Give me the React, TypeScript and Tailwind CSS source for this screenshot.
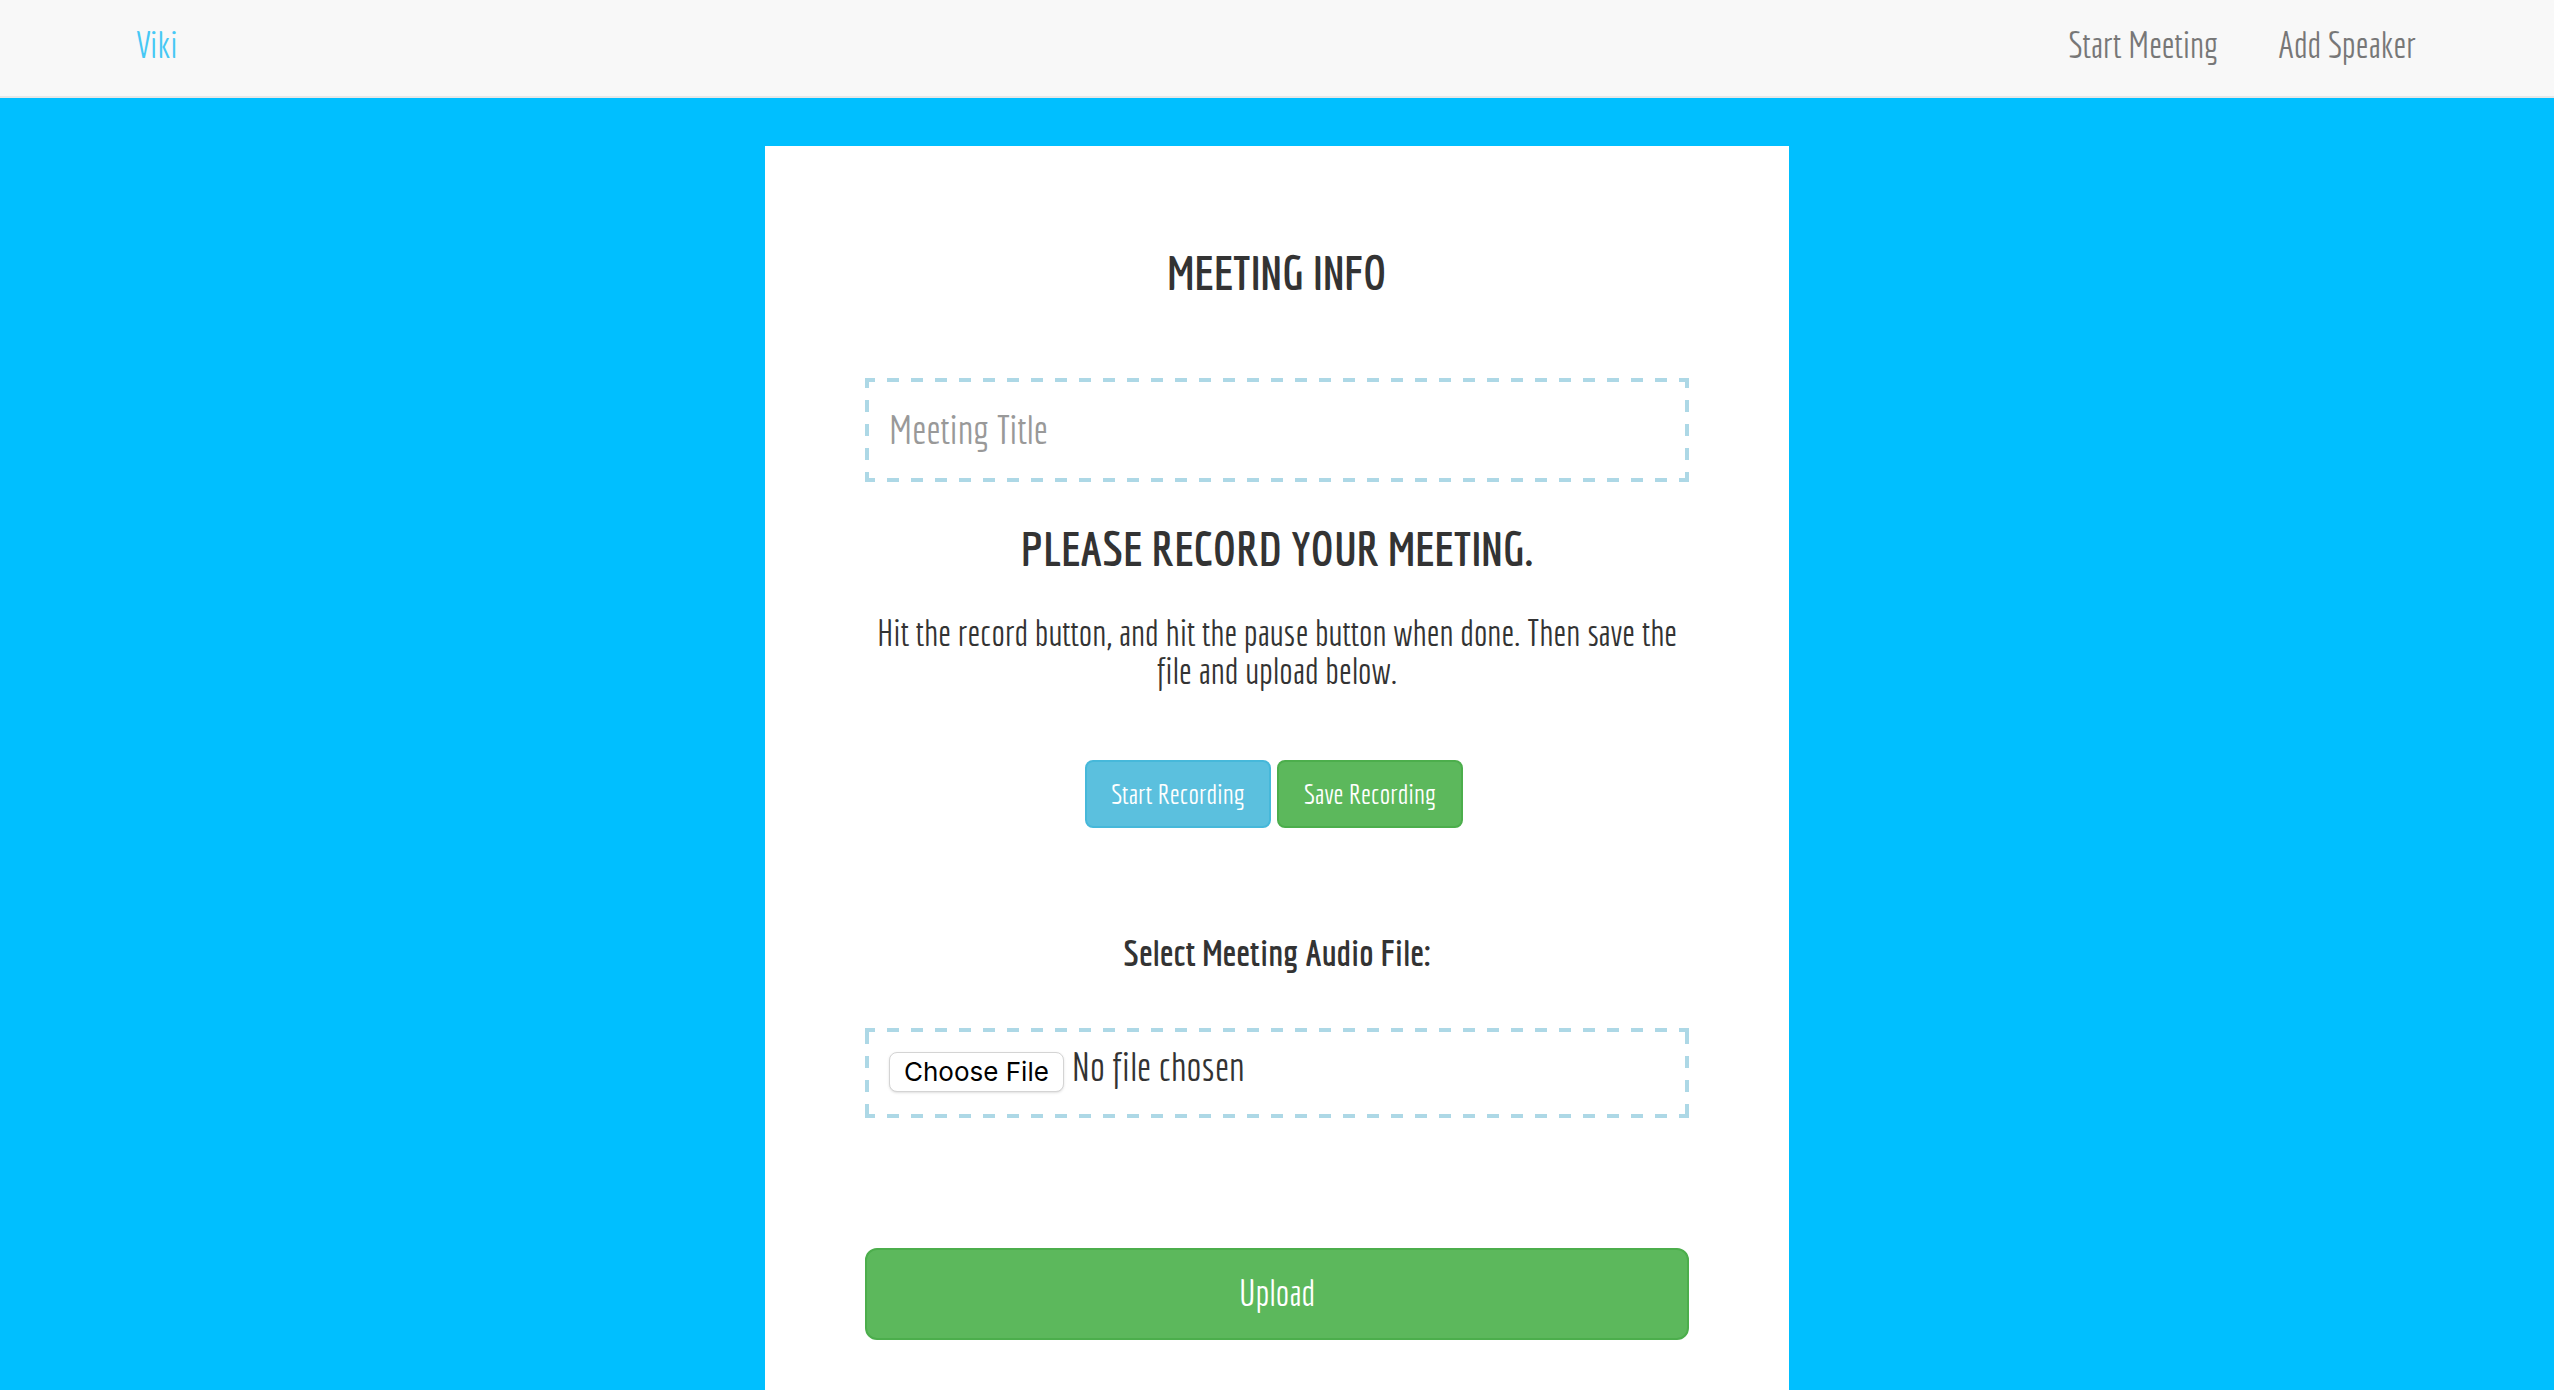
import React from 'react';

const navLinks = ['Start Meeting', 'Add Speaker'];

function NavBar() {
  return (
    <header className="border-b-2 border-[#e7e7e7] bg-[#f8f8f8]">
      <nav className="flex h-24 items-center justify-between pr-[138px] pb-1.5 pl-[136px] text-[36px] leading-10">
        <a href="#home" className="text-[#46c8f5]">Viki</a>
        <div className="flex gap-[60px] text-[#777777]">
          {navLinks.map((label) => (
            <a key={label} href="#link">{label}</a>
          ))}
        </div>
      </nav>
    </header>
  );
}

// Wide 12px dashes on all four sides, drawn as repeating 24px tiles.
const titleDashes =
  '[background:linear-gradient(90deg,#add8e6_50%,transparent_50%)_-2px_0/24px_4px_repeat-x,linear-gradient(90deg,#add8e6_50%,transparent_50%)_-2px_100%/24px_4px_repeat-x,linear-gradient(#add8e6_50%,transparent_50%)_0_-2px/4px_24px_repeat-y,linear-gradient(#add8e6_50%,transparent_50%)_100%_-2px/4px_24px_repeat-y]';
const fileDashes =
  '[background:linear-gradient(90deg,#add8e6_50%,transparent_50%)_-2px_0/24px_4px_repeat-x,linear-gradient(90deg,#add8e6_50%,transparent_50%)_-2px_100%/24px_4px_repeat-x,linear-gradient(#add8e6_50%,transparent_50%)_0_4px/4px_24px_repeat-y,linear-gradient(#add8e6_50%,transparent_50%)_100%_4px/4px_24px_repeat-y]';

const field = 'block w-full px-6 text-[40px] text-[#333333] outline-none';

export default function App() {
  return (
    <div className="flex min-h-screen flex-col bg-[#00bfff] font-[Economica,'Liberation_Sans',sans-serif] text-[#333333] [font-variant-ligatures:none]">
      <NavBar />
      <main className="mx-auto mt-12 w-full max-w-[1024px] flex-1 bg-white px-[100px] pt-[100px] pb-12 text-center">
        <form onSubmit={(event) => event.preventDefault()}>
          <h1 className="text-[48px] leading-[52px] font-bold">MEETING INFO</h1>
          <input
            type="text"
            aria-label="Meeting Title"
            placeholder="Meeting Title"
            className={`${field} ${titleDashes} mt-20 h-[104px] pb-0.5 placeholder:text-[#999999]`}
          />
          <h2 className="mt-10 text-[48px] leading-[52px] font-bold">PLEASE RECORD YOUR MEETING.</h2>
          <p className="mt-10 text-[36px] leading-[38px]">
            Hit the record button, and hit the pause button when done. Then save the file and upload below.
          </p>
          <div className="mt-[70px] flex justify-center gap-1.5 pr-1.5 text-[28px] text-white">
            <button type="button" className="h-[68px] w-[186px] rounded-lg border-2 border-[#46b8da] bg-[#5bc0de]">
              Start Recording
            </button>
            <button type="button" className="h-[68px] w-[186px] rounded-lg border-2 border-[#4cae4c] bg-[#5cb85c]">
              Save Recording
            </button>
          </div>
          <label htmlFor="audio" className="mt-[105px] block text-[36px] leading-10 font-bold">
            Select Meeting Audio File:
          </label>
          <input
            id="audio"
            type="file"
            className={`${field} ${fileDashes} mt-[55px] h-[90px] pt-2 file:mr-2 file:h-10 file:rounded-lg file:border file:border-solid file:border-[#d4d4d4] file:bg-white file:px-3.5 file:font-[Inter] file:text-[26px] file:leading-8 file:text-black file:shadow-sm`}
          />
          <button
            type="submit"
            className="mt-[130px] h-[92px] w-full rounded-xl border-2 border-[#4cae4c] bg-[#5cb85c] pb-0.5 text-[36px] text-white"
          >
            Upload
          </button>
        </form>
      </main>
    </div>
  );
}
